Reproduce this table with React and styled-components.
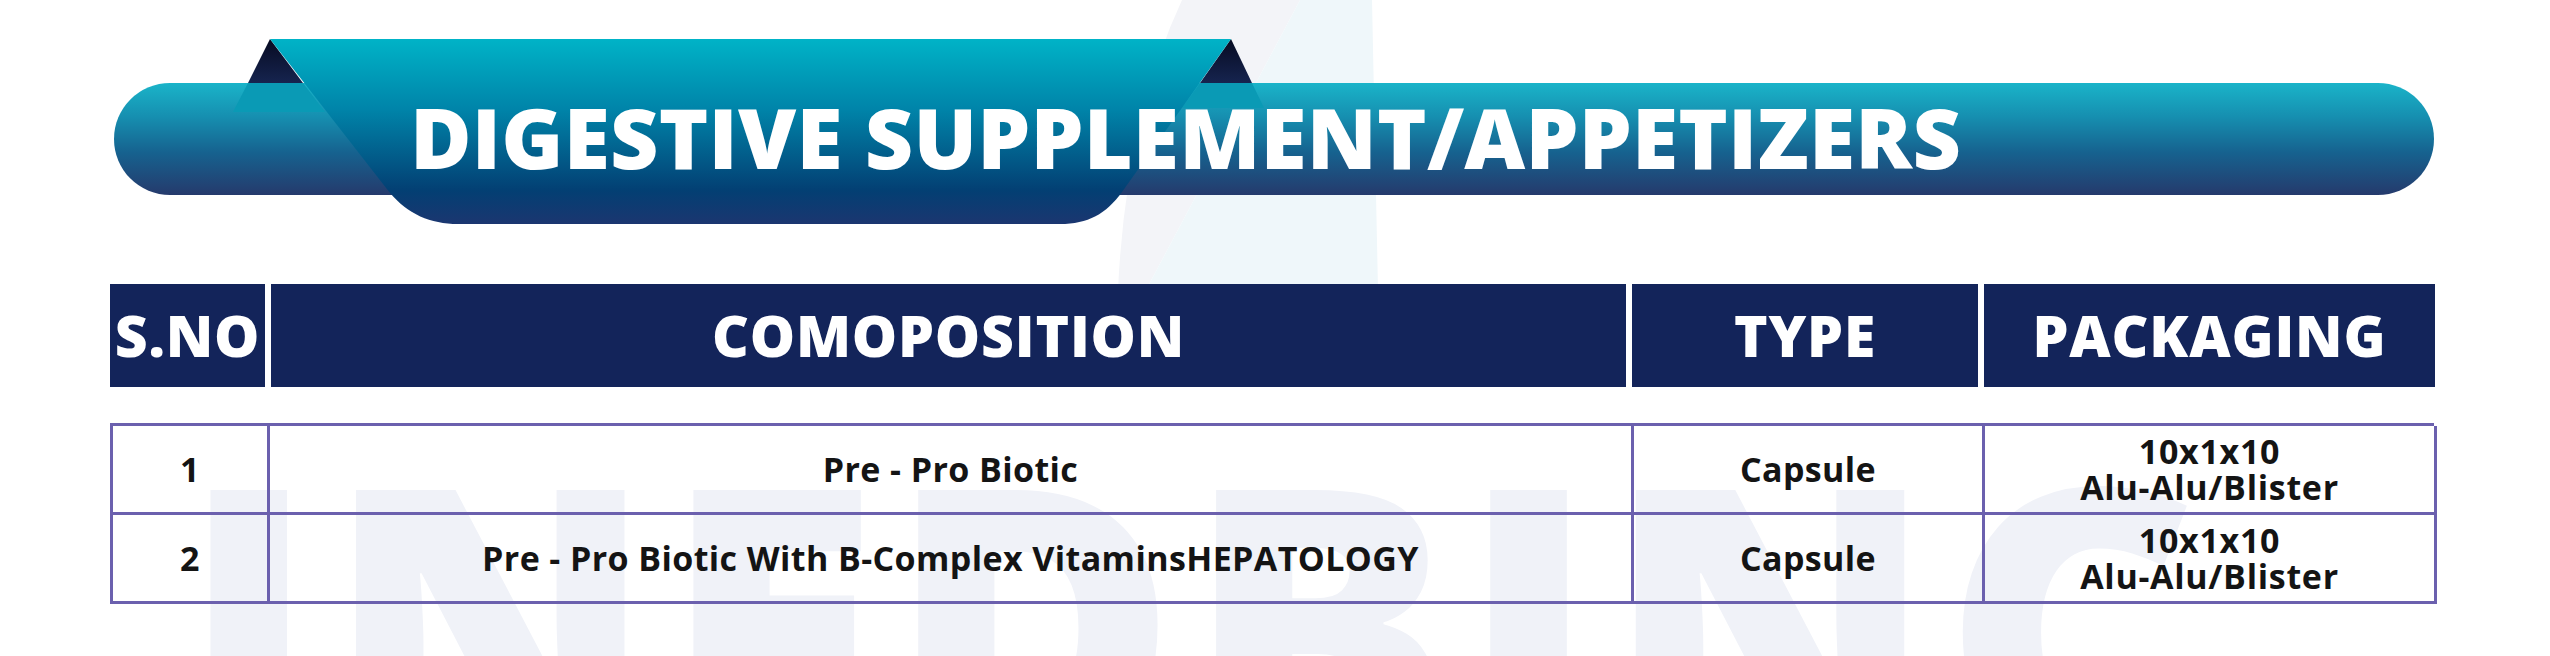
import React from "react";
import styled, { createGlobalStyle } from "styled-components";

const GlobalStyle = createGlobalStyle`
  html, body {
    margin: 0;
    padding: 0;
    background: #ffffff;
  }
  body {
    font-family: "Open Sans", "Liberation Sans", sans-serif;
  }
`;

const Page = styled.div`
  position: relative;
  width: 2550px;
  height: 656px;
  overflow: hidden;
  background: #ffffff;
`;

const Backdrop = styled.svg`
  position: absolute;
  left: 0;
  top: 0;
  z-index: 0;
`;

const Watermark = styled.div`
  position: absolute;
  left: 180px;
  top: 422px;
  z-index: 0;
  font-family: "Open Sans", sans-serif;
  font-weight: 800;
  font-size: 395px;
  line-height: 1;
  letter-spacing: 8px;
  color: #f0f2f8;
  white-space: nowrap;
  user-select: none;
`;

const Content = styled.div`
  position: relative;
  z-index: 1;
  display: flex;
  flex-direction: column;
`;

const Banner = styled.div`
  position: relative;
  margin-top: 39px;
  padding: 44px 116px 29px 114px;
`;

const Ribbon = styled.svg`
  position: absolute;
  left: 0;
  top: 0;
  z-index: 1;
`;

const Bar = styled.div`
  height: 112px;
  border-radius: 56px;
  background: linear-gradient(180deg, #1ab4c9 0%, #168fb0 30%, #16628f 62%, #253a6c 100%);
  display: flex;
  align-items: center;
  padding-left: 296px;
`;

const Title = styled.h1`
  position: relative;
  z-index: 2;
  margin: 0;
  margin-top: -4px;
  font-family: "Open Sans", sans-serif;
  font-weight: 800;
  font-size: 84px;
  line-height: 1;
  letter-spacing: 0.2px;
  color: #ffffff;
  white-space: nowrap;
`;

const HeadRow = styled.div`
  display: grid;
  grid-template-columns: 155px 1355px 346px 451px;
  gap: 6px;
  margin: 60px 0 0 110px;
`;

const HeadCell = styled.div`
  height: 103px;
  background: #13245a;
  display: flex;
  align-items: center;
  justify-content: center;
  color: #ffffff;
  font-family: "Open Sans", sans-serif;
  font-weight: 800;
  font-size: 57px;
  letter-spacing: 0.8px;
  line-height: 1;
  white-space: nowrap;
`;

const Table = styled.div`
  display: grid;
  grid-template-columns: 157px 1364px 351px 452px;
  margin: 36px 0 0 110px;
  width: 2324px;
  border-top: 3px solid #6b60ae;
  border-left: 3px solid #6b60ae;
  box-sizing: border-box;
`;

const Cell = styled.div`
  height: 89px;
  box-sizing: border-box;
  border-right: 3px solid #6b60ae;
  border-bottom: 3px solid #6b60ae;
  display: flex;
  flex-direction: column;
  align-items: center;
  justify-content: center;
  color: #141414;
  font-family: "Open Sans", sans-serif;
  font-weight: 700;
  font-size: 34px;
  line-height: ${(p) => (p.$stacked ? "36px" : "1.2")};
  letter-spacing: ${(p) => (p.$stacked ? "0.7px" : "0.4px")};
  white-space: nowrap;
`;

const rows = [
  { no: "1", name: "Pre - Pro Biotic", type: "Capsule", pack: ["10x1x10", "Alu-Alu/Blister"] },
  {
    no: "2",
    name: "Pre - Pro Biotic With B-Complex VitaminsHEPATOLOGY",
    type: "Capsule",
    pack: ["10x1x10", "Alu-Alu/Blister"],
  },
];

const App = () => {
  return (
    <>
      <GlobalStyle />
      <Page>
        <Backdrop width="2550" height="656" viewBox="0 0 2550 656">
          <path d="M1182 0 L1300 0 L1146 290 L1118 290 Q1126 120 1182 0 Z" fill="#f3f4f8" />
          <path d="M1300 0 L1372 0 L1378 290 L1146 290 Z" fill="#eff7fa" />
        </Backdrop>
        <Watermark>INEDBINC.</Watermark>

        <Content>
          <Banner>
            <Ribbon width="2550" height="185" viewBox="0 39 2550 185">
              <defs>
                <linearGradient id="ribbonFill" x1="0" y1="39" x2="0" y2="224" gradientUnits="userSpaceOnUse">
                  <stop offset="0" stopColor="#00b3c7" />
                  <stop offset="0.38" stopColor="#0084a9" />
                  <stop offset="0.82" stopColor="#033f73" />
                  <stop offset="1" stopColor="#1b3670" />
                </linearGradient>
                <linearGradient id="foldFill" x1="0" y1="39" x2="0" y2="83" gradientUnits="userSpaceOnUse">
                  <stop offset="0" stopColor="#070b22" />
                  <stop offset="1" stopColor="#16244f" />
                </linearGradient>
              </defs>
              <polygon points="248,83 303,83 325,112 233,112" fill="#0a9ab5" />
              <polygon points="1200,83 1252,83 1264,108 1182,108" fill="#0a9ab5" />
              <polygon points="270,39 248,83 303,83" fill="url(#foldFill)" />
              <polygon points="1231,39 1200,83 1252,83" fill="url(#foldFill)" />
              <path
                d="M270 39 L1231 39 L1122 192 C1106 214 1088 224 1060 224 L458 224 C430 224 408 214 390 193 Z"
                fill="url(#ribbonFill)"
              />
            </Ribbon>
            <Bar>
              <Title>DIGESTIVE SUPPLEMENT/APPETIZERS</Title>
            </Bar>
          </Banner>

          <HeadRow>
            <HeadCell>S.NO</HeadCell>
            <HeadCell>COMOPOSITION</HeadCell>
            <HeadCell>TYPE</HeadCell>
            <HeadCell>PACKAGING</HeadCell>
          </HeadRow>

          <Table>
            {rows.map((r) => (
              <React.Fragment key={r.no}>
                <Cell>{r.no}</Cell>
                <Cell>{r.name}</Cell>
                <Cell>{r.type}</Cell>
                <Cell $stacked>
                  {r.pack.map((line) => (
                    <span key={line}>{line}</span>
                  ))}
                </Cell>
              </React.Fragment>
            ))}
          </Table>
        </Content>
      </Page>
    </>
  );
};

export default App;
